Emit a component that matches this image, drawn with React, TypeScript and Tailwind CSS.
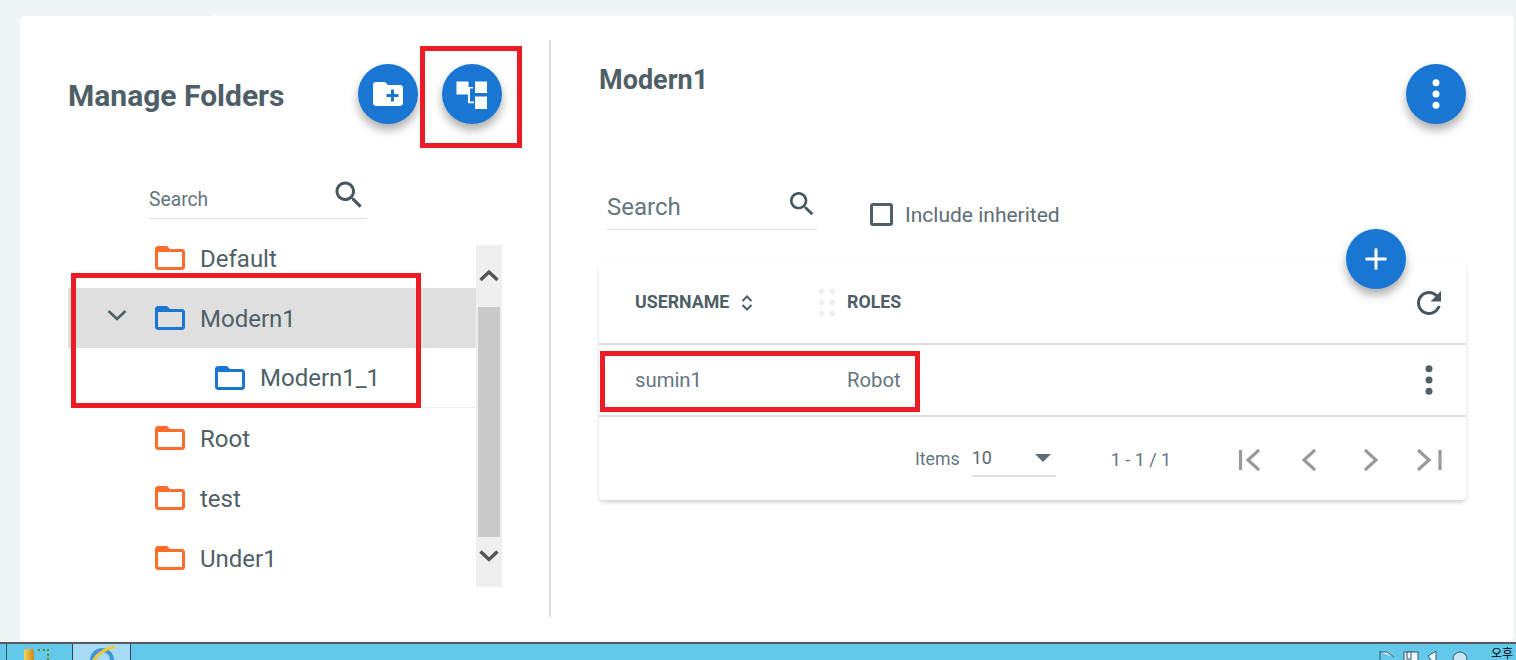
import React from "react";

const P = {
  folder: "M20 6h-8l-2-2H4c-1.1 0-1.99.9-1.99 2L2 18c0 1.1.9 2 2 2h16c1.1 0 2-.9 2-2V8c0-1.1-.9-2-2-2zm0 12H4V8h16v10z",
  newFolder: "M20 6h-8l-2-2H4c-1.11 0-1.99.89-1.99 2L2 18c0 1.11.89 2 2 2h16c1.11 0 2-.89 2-2V8c0-1.11-.89-2-2-2zm-1 8h-3v3h-2v-3h-3v-2h3V9h2v3h3v2z",
  search: "M15.5 14h-.79l-.28-.27C15.41 12.59 16 11.11 16 9.5 16 5.91 13.09 3 9.5 3S3 5.91 3 9.5 5.91 16 9.5 16c1.61 0 3.09-.59 4.23-1.57l.27.28v.79l5 4.99L20.49 19l-4.99-5zm-6 0C7.01 14 5 11.99 5 9.5S7.01 5 9.5 5 14 7.01 14 9.5 11.99 14 9.5 14z",
  refresh: "M17.65 6.35C16.2 4.9 14.21 4 12 4c-4.42 0-7.99 3.58-7.99 8s3.57 8 7.99 8c3.73 0 6.84-2.55 7.73-6h-2.08c-.82 2.33-3.04 4-5.65 4-3.31 0-6-2.69-6-6s2.69-6 6-6c1.66 0 3.14.69 4.22 1.78L13 11h7V4l-2.35 2.35z",
  plus: "M19 13h-6v6h-2v-6H5v-2h6V5h2v6h6v2z",
};

function Icon({ d, size, className }: { d: string; size: number; className?: string }) {
  return (
    <svg width={size} height={size} viewBox="0 0 24 24" className={className} fill="currentColor">
      <path d={d} />
    </svg>
  );
}

function Dots({ className }: { className?: string }) {
  return (
    <svg width="36" height="36" viewBox="0 0 36 36" className={className} fill="currentColor">
      <circle cx="18" cy="6.800" r="3.500" />
      <circle cx="18" cy="18" r="3.500" />
      <circle cx="18" cy="29.200" r="3.500" />
    </svg>
  );
}

function Fab({ children, className = "" }: { children: React.ReactNode; className?: string }) {
  return (
    <div className={`flex h-[60px] w-[60px] shrink-0 items-center justify-center rounded-full bg-[#1976d2] text-white shadow-[0_6px_10px_rgba(0,0,0,0.32)] ${className}`}>
      {children}
    </div>
  );
}

function TreeIcon() {
  return (
    <svg width="32" height="32" viewBox="0 0 32 32" fill="#ffffff">
      <rect x="0.5" y="3.5" width="12" height="13" />
      <rect x="19" y="3.5" width="12" height="11.5" />
      <rect x="19" y="18.5" width="12" height="12.5" />
      <path d="M12 9h5v1.600h-3v13h4v1.600h-6V10.600h0z" />
    </svg>
  );
}

function FolderRow({ name, color, level = 0, selected = false, chevron = false, line = false }: { name: string; color: string; level?: number; selected?: boolean; chevron?: boolean; line?: boolean }) {
  return (
    <div className={`flex h-[60px] items-center ${selected ? "bg-[#dfdfdf]" : ""} ${line ? "border-b border-[#eeeeee]" : ""} ${level ? "pl-[144px]" : "pl-[84px]"}`}>
      {chevron && (
        <svg width="22" height="14" viewBox="0 0 22 14" className="-ml-[46px] mr-[24px] -mt-[6px] text-[#4f5f67]" fill="none" stroke="currentColor" strokeWidth="2.6">
          <path d="M2.5 3l8.5 8 8.500-8" />
        </svg>
      )}
      <Icon d={P.folder} size={36} className={`-my-1 shrink-0 ${color}`} />
      <span className="ml-[12px] mt-[1px] text-[24px] leading-none text-[#4f6068]">{name}</span>
    </div>
  );
}

function Pager({ d }: { d: string }) {
  return (
    <svg width="28" height="28" viewBox="0 0 28 28" fill="none" stroke="#9a9a9a" strokeWidth="3.2">
      <path d={d} />
    </svg>
  );
}

function Redbox({ className }: { className: string }) {
  return <div className={`pointer-events-none absolute border-[5px] border-[#ed1c24] ${className}`} />;
}

export default function App() {
  return (
    <div className="relative flex h-[660px] w-[1516px] flex-col overflow-hidden bg-[#eff4f7] font-['Roboto',sans-serif]">
      <div className="ml-[20px] mr-[2px] mt-[16px] flex h-[625px] shrink-0 rounded-[6px] bg-white py-[24px]">
        {/* Left panel */}
        <div className="w-[531px] shrink-0 border-r-2 border-[#dddddd] pl-[48px]">
          <div className="mt-[24px] flex h-[60px] items-center">
            <h1 className="mt-[3px] w-[290px] text-[30px] font-bold text-[#4f5f67]">Manage Folders</h1>
            <Fab><Icon d={P.newFolder} size={36} /></Fab>
            <Fab className="ml-[24px]"><TreeIcon /></Fab>
          </div>
          <div className="ml-[81px] mt-[52px] flex h-[43px] w-[217px] items-center justify-between border-b border-[#e0e0e0]">
            <span className="mt-[6px] text-[19.300px] text-[#64767f]">Search</span>
            <Icon d={P.search} size={36} className="-mr-[1px] -mt-[4px] text-[#46585f]" />
          </div>
          <div className="mt-[9px] flex">
            <div className="w-[408px]">
              <FolderRow name="Default" color="text-[#ff6d2d]" />
              <FolderRow name="Modern1" color="text-[#1976d2]" selected chevron />
              <FolderRow name="Modern1_1" color="text-[#1976d2]" level={1} line />
              <FolderRow name="Root" color="text-[#ff6d2d]" />
              <FolderRow name="test" color="text-[#ff6d2d]" />
              <FolderRow name="Under1" color="text-[#ff6d2d]" />
            </div>
            <div className="mt-[17px] flex h-[342px] w-[26px] flex-col items-center bg-[#efefef]">
              <svg width="22" height="18" viewBox="0 0 22 18" className="mt-[22px]" fill="none" stroke="#555555" strokeWidth="3.4"><path d="M2.5 13L11 5l8.500 8" /></svg>
              <div className="mt-[22px] h-[230px] w-[22px] bg-[#c9c9c9]" />
              <svg width="22" height="18" viewBox="0 0 22 18" className="mt-[10px]" fill="none" stroke="#555555" strokeWidth="3.4"><path d="M2.500 4.500L11 12.500l8.500-8" /></svg>
            </div>
          </div>
        </div>

        {/* Right panel */}
        <div className="flex-1 pl-[48px] pr-[48px]">
          <div className="mt-[24px] flex h-[60px] items-start justify-between">
            <h2 className="-mt-[3px] text-[27px] font-bold leading-[38px] text-[#4f5f67]">Modern1</h2>
            <Fab><Dots /></Fab>
          </div>
          <div className="relative z-0 mt-[56px] flex h-[50px] items-start pl-[8px]">
            <div className="flex h-[50px] w-[210px] items-center justify-between border-b border-[#dedede]">
              <span className="mt-[4px] text-[24px] text-[#64767f]">Search</span>
              <Icon d={P.search} size={32} className="-mr-[1px] -mt-[2px] text-[#46585f]" />
            </div>
            <div className="ml-[53px] mt-[23px] flex items-center">
              <div className="h-[23px] w-[23px] rounded-[3px] border-[3px] border-[#4f5f67]" />
              <span className="ml-[12px] mt-[2px] text-[21px] leading-none text-[#5c6d76]">Include inherited</span>
            </div>
          </div>
          <div className="relative mt-[32px] h-[238px] w-[867px] rounded-[4px] bg-white shadow-[0_3px_5px_-1px_rgba(0,0,0,0.2),0_0_2px_rgba(0,0,0,0.03)]">
            <Fab className="absolute -top-[33px] right-[60px] z-10"><Icon d={P.plus} size={36} /></Fab>
            <div className="flex h-[83px] items-center border-b-2 border-[#dedede] pl-[36px] pr-[20px]">
              <span className="w-[105px] text-[17.800px] font-bold text-[#4f5f67]">USERNAME</span>
              <svg width="14" height="18" viewBox="0 0 14 18" fill="none" stroke="#4f5f67" strokeWidth="2"><path d="M2.500 7L7 2.500 11.500 7M2.500 11l4.500 4.500 4.500-4.500" /></svg>
              <div className="ml-[65px] mr-[12px] grid grid-cols-2 gap-[6px]">
                {[0, 1, 2, 3, 4, 5].map((i) => <div key={i} className="h-[5px] w-[5px] rotate-45 bg-[#eeeeee]" />)}
              </div>
              <span className="text-[17.800px] font-bold text-[#4f5f67]">ROLES</span>
              <Icon d={P.refresh} size={36} className="ml-auto -mr-[1px] text-[#46585f]" />
            </div>
            <div className="flex h-[72px] items-center border-b-2 border-[#dedede] pl-[36px] pr-[20px]">
              <span className="w-[212px] text-[20.300px] text-[#64767f]">sumin1</span>
              <span className="text-[20.300px] text-[#64767f]">Robot</span>
              <Dots className="ml-auto -mr-[1px] text-[#4f5f67]" />
            </div>
            <div className="flex h-[83px] items-center pl-[316px] pr-[22px]">
              <span className="mt-[2px] text-[17.700px] text-[#64767f]">Items</span>
              <div className="ml-[12px] flex h-[37px] w-[84px] items-center justify-between border-b-2 border-[#dedede] pr-[5px]">
                <span className="text-[18px] text-[#5b6a72]">10</span>
                <svg width="16" height="8" viewBox="0 0 16 8" fill="#5b6f7b"><path d="M0 0h16l-8 8z" /></svg>
              </div>
              <span className="ml-[55px] mt-[2px] text-[18px] text-[#64767f]">1 - 1 / 1</span>
              <div className="ml-auto flex w-[206px] items-center justify-between pt-[3px]">
                <Pager d="M2.500 4v20M21 4L10 14l11 10" />
                <Pager d="M18 4L7 14l11 10" />
                <Pager d="M8 4l11 10L8 24" />
                <Pager d="M2 4l11 10L2 24M24 4v20" />
              </div>
            </div>
          </div>
        </div>
      </div>

      {/* Soft edge along the top of the card */}
      <div className="pointer-events-none absolute left-[212px] right-[2px] top-[13px] h-[5px] bg-gradient-to-b from-transparent to-white" />

      {/* Taskbar */}
      <div className="relative mt-[1px] h-[18px] flex-1 border-t-2 border-[#575c60] bg-[#63c8e9]">
        <div className="absolute bottom-0 left-[6px] top-0 w-px bg-[#2a5a70]" />
        <div className="absolute bottom-0 left-[72px] top-0 w-[59px] border-x border-[#2a4a5a] bg-[#a6dbf5]" />
        <div className="absolute left-[24px] top-[5px] h-[14px] w-[10px] rounded-t-[2px] bg-gradient-to-r from-[#f7d25a] to-[#c98a10]" />
        <div className="absolute left-[38px] top-[5px] h-[2px] w-[11px] border-t-2 border-dotted border-[#5c8a2a]" />
        <div className="absolute left-[47px] top-[5px] h-[11px] w-[2px] border-r-2 border-dotted border-[#5c8a2a]" />
        <svg width="30" height="16" viewBox="0 0 30 16" className="absolute left-[87px] top-[1px]" fill="none">
          <circle cx="15" cy="15" r="10" stroke="#3f97d8" strokeWidth="4" />
          <path d="M3 22C8 10 18 3 28 2" stroke="#f4c531" strokeWidth="3" />
        </svg>
        <div className="absolute left-[1379px] top-[7px] flex items-start gap-[8px] text-white">
          <svg width="16" height="10" viewBox="0 0 16 10" fill="#eef7fb" stroke="#33586a"><path d="M1 0v10M1 1h7l7 5" /></svg>
          <svg width="16" height="10" viewBox="0 0 16 10" fill="#eef7fb" stroke="#33586a"><rect x="1" y="1" width="14" height="10" /><rect x="4" y="1" width="4" height="7" /></svg>
          <svg width="10" height="10" viewBox="0 0 10 10" fill="#eef7fb" stroke="#33586a"><path d="M9 0v10H5L1 5z" /></svg>
          <svg width="16" height="10" viewBox="0 0 16 10" className="ml-[7px]" fill="#c7e5f0" stroke="#33586a"><circle cx="8" cy="8" r="7" /></svg>
        </div>
        <span className="absolute left-[1491px] top-[3px] font-['Noto_Sans_CJK_KR',sans-serif] text-[12px] leading-none text-black">오후</span>
      </div>

      {/* Annotation boxes */}
      <Redbox className="left-[420px] top-[46px] h-[102px] w-[102px]" />
      <Redbox className="left-[71px] top-[273px] h-[135px] w-[350px]" />
      <Redbox className="left-[600px] top-[351px] h-[61px] w-[320px]" />
    </div>
  );
}
